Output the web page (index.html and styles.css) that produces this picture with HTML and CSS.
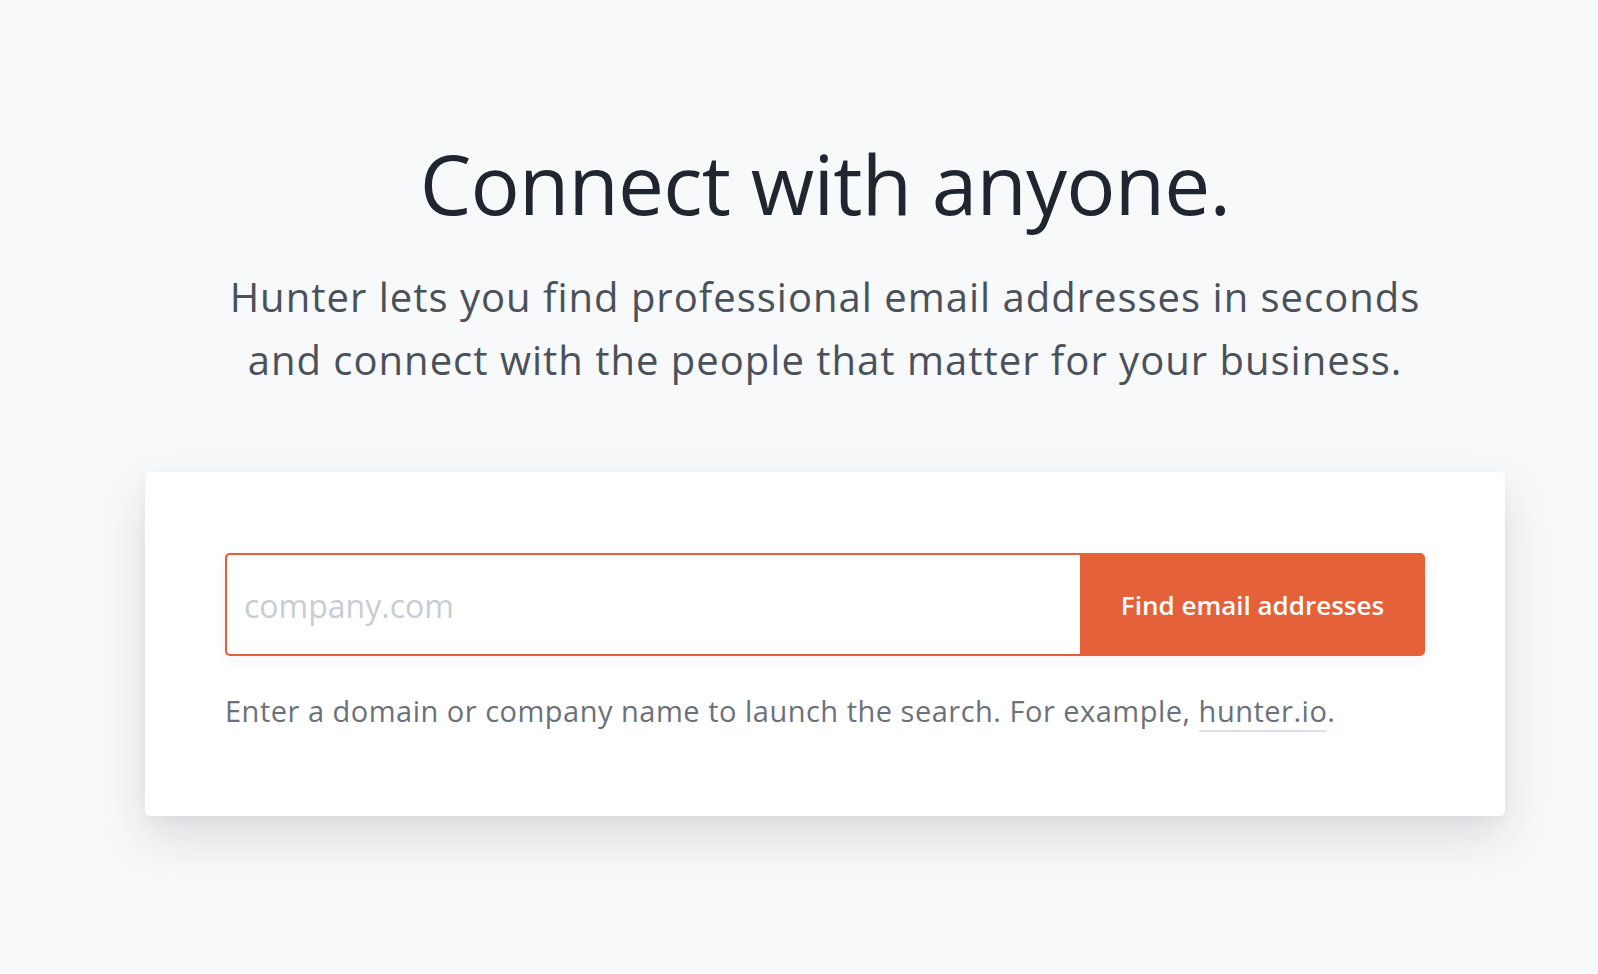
FILE: index.html
```html
<!DOCTYPE html>
<html lang="en">
<head>
<meta charset="utf-8">
<title>Hunter</title>
<link rel="stylesheet" href="styles.css">
</head>
<body>
<main class="hero">
  <h1 class="hero-title">Connect with anyone.</h1>
  <p class="hero-lead">Hunter lets you find professional email addresses in seconds<br>and connect with the people that matter for your business.</p>
  <section class="search-card">
    <form class="search-form">
      <input class="search-input" type="text" placeholder="company.com">
      <button class="search-button" type="button">Find email addresses</button>
    </form>
    <p class="search-help">Enter a domain or company name to launch the search. For example, <a class="search-example" href="#">hunter.io</a>.</p>
  </section>
</main>
</body>
</html>
```
FILE: styles.css
```css
html, body {
  margin: 0;
  padding: 0;
  background: #f8f9fa;
}
body {
  font-family: "Open Sans", "Noto Sans", sans-serif;
  height: 974px;
  overflow: hidden;
}
.hero {
  display: flex;
  flex-direction: column;
  align-items: center;
  padding: 134px 0 0 52px;
}
.hero-title {
  margin: 0;
  font-size: 82px;
  line-height: 1.2;
  font-weight: 400;
  color: #1f262f;
  letter-spacing: -0.8px;
}
.hero-lead {
  margin: 33px 0 0;
  font-size: 40px;
  line-height: 63px;
  letter-spacing: 1px;
  color: #4a515b;
  text-align: center;
}
.search-card {
  box-sizing: border-box;
  width: 1360px;
  margin-top: 81px;
  padding: 81px 80px 85px;
  background: #ffffff;
  border-radius: 5px;
  box-shadow: 0 22px 50px rgba(20, 30, 45, 0.13), 0 4px 12px rgba(20, 30, 45, 0.04);
}
.search-form {
  display: flex;
  height: 103px;
  border-radius: 5px;
  box-shadow: 0 4px 14px rgba(20, 30, 45, 0.06);
}
.search-input {
  flex: 1;
  box-sizing: border-box;
  height: 100%;
  margin: 0;
  padding: 2px 17px 0;
  border: 2px solid #e0613b;
  border-right: none;
  border-radius: 5px 0 0 5px;
  font-family: inherit;
  font-size: 32px;
  color: #1f262f;
  background: #fff;
  outline: none;
}
.search-input::placeholder {
  color: #c9ccd2;
}
.search-button {
  width: 345px;
  height: 100%;
  margin: 0;
  border: none;
  border-radius: 0 5px 5px 0;
  background: #e5613a;
  color: #ffffff;
  font-family: inherit;
  font-size: 26px;
  font-weight: 600;
  cursor: pointer;
}
.search-help {
  margin: 35px 0 0;
  font-size: 29px;
  line-height: 40px;
  letter-spacing: 0.5px;
  color: #6b717a;
}
.search-example {
  color: #6b717a;
  text-decoration: none;
  border-bottom: 2px solid #dcdfe3;
}
```
